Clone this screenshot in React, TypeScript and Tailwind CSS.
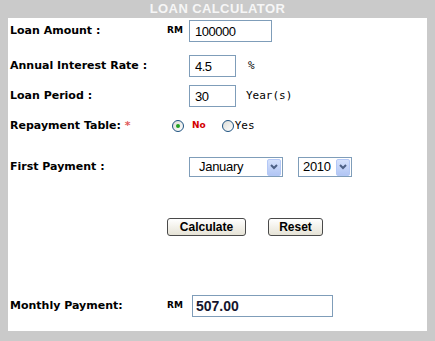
import React from 'react'

const label = "w-[157px] shrink-0 font-bold text-[11px] text-black font-['DejaVu_Sans',Verdana,sans-serif]"
const rm = "w-[22px] shrink-0 font-bold text-[9px] text-black font-['DejaVu_Sans',Verdana,sans-serif]"
const input =
  "h-[22px] border border-[#7f9db9] bg-white px-[5px] text-[13px] tracking-[-0.5px] text-black font-['Liberation_Sans',Arial,sans-serif] outline-none"
const mono = "text-[11px] text-black font-['DejaVu_Sans_Mono',monospace]"

function Arrow() {
  return (
    <span className="flex h-[17px] w-[14px] items-center justify-center rounded-[2px] border border-[#b4c8f6] bg-gradient-to-b from-[#d6e2fc] to-[#b2c6f4]">
      <svg width="8" height="6" viewBox="0 0 8 6">
        <polyline points="1,1 4,4 7,1" fill="none" stroke="#4d6185" strokeWidth="2" />
      </svg>
    </span>
  )
}

function Select({ value, width, pad }: { value: string; width: string; pad: string }) {
  return (
    <div className={`flex h-[20px] items-center justify-between border border-[#7f9db9] bg-white pr-[1px] ${width}`}>
      <span className={`text-[13px] tracking-[-0.3px] text-black font-['Liberation_Sans',Arial,sans-serif] ${pad}`}>{value}</span>
      <Arrow />
    </div>
  )
}

function Radio({ checked }: { checked?: boolean }) {
  return (
    <span className="flex h-[12px] w-[12px] items-center justify-center rounded-full border border-[#1c5180] bg-gradient-to-br from-[#dcdcd6] to-white">
      {checked && <span className="h-[4px] w-[4px] rounded-full bg-[#21a121]" />}
    </span>
  )
}

const btn =
  "flex h-[18px] items-center justify-center rounded-[3px] border border-[#4a4a4a] bg-gradient-to-b from-white to-[#e6e3d6] text-[12px] font-bold text-black font-['Liberation_Sans',Arial,sans-serif]"

export default function App() {
  return (
    <div className="h-[341px] w-[435px] bg-[#cacaca]">
      <div className="flex h-[18px] items-center justify-center text-[13px] font-bold tracking-[0.4px] text-[#f6f6f6] font-['Liberation_Sans',Arial,sans-serif]">
        LOAN CALCULATOR
      </div>
      <div className="ml-[8px] flex h-[313px] w-[419px] flex-col bg-white pl-[2px] pt-[2px]">
        <div className="flex h-[22px] items-center">
          <div className={label}>Loan Amount :</div>
          <div className={rm}>RM</div>
          <input className={`${input} w-[83px]`} defaultValue="100000" />
        </div>

        <div className="mt-[13px] flex h-[22px] items-center">
          <div className={label}>Annual Interest Rate :</div>
          <div className="w-[22px] shrink-0" />
          <input className={`${input} w-[47px]`} defaultValue="4.5" />
          <span className={`${mono} ml-[12px]`}>%</span>
        </div>

        <div className="mt-[8px] flex h-[22px] items-center">
          <div className={label}>Loan Period :</div>
          <div className="w-[22px] shrink-0" />
          <input className={`${input} w-[47px]`} defaultValue="30" />
          <span className={`${mono} ml-[10px]`}>Year(s)</span>
        </div>

        <div className="mt-[11px] flex h-[16px] items-center">
          <div className={label}>
            Repayment Table: <span className="text-[#e05a5a]">*</span>
          </div>
          <div className="ml-[5px] flex items-center">
            <Radio checked />
            <span className="ml-[8px] text-[9px] font-bold text-[#d40000] font-['DejaVu_Sans',Verdana,sans-serif]">No</span>
            <span className="ml-[16px]">
              <Radio />
            </span>
            <span className={`${mono} ml-[1px]`}>Yes</span>
          </div>
        </div>

        <div className="mt-[23px] flex h-[20px] items-center">
          <div className={label}>First Payment :</div>
          <div className="w-[22px] shrink-0" />
          <Select value="January" width="w-[94px]" pad="pl-[9px]" />
          <div className="ml-[15px]">
            <Select value="2010" width="w-[54px]" pad="pl-[4px]" />
          </div>
        </div>

        <div className="mt-[41px] flex h-[18px] items-center">
          <div className="w-[157px] shrink-0" />
          <button className={`${btn} w-[79px]`}>Calculate</button>
          <button className={`${btn} ml-[22px] w-[55px]`}>Reset</button>
        </div>

        <div className="mt-[59px] flex h-[22px] items-center">
          <div className={label}>Monthly Payment:</div>
          <div className="w-[25px] shrink-0 font-bold text-[9px] text-black font-['DejaVu_Sans',Verdana,sans-serif]">RM</div>
          <input
            className="h-[22px] w-[141px] border border-[#7f9db9] bg-white px-[3px] text-[14px] font-bold text-[#15152e] font-['Liberation_Sans',Arial,sans-serif] outline-none"
            defaultValue="507.00"
          />
        </div>
      </div>
    </div>
  )
}
